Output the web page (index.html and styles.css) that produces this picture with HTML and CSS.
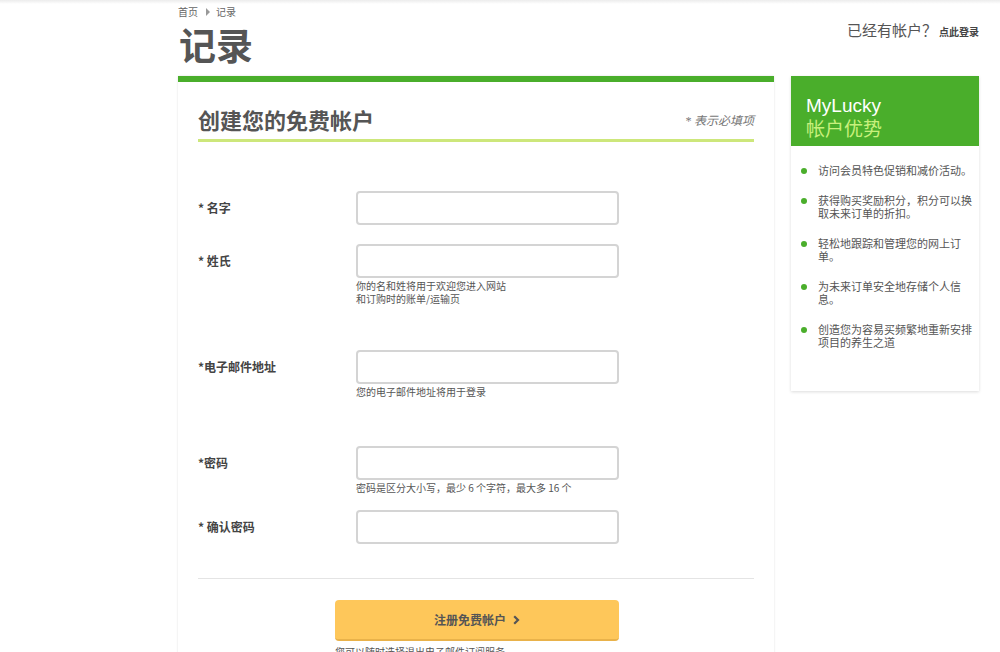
FILE: index.html
```html
<!DOCTYPE html>
<html lang="zh">
<head>
<meta charset="utf-8">
<title>记录</title>
<link rel="stylesheet" href="styles.css">
</head>
<body>
<div class="page">
  <header class="top">
    <div class="top-left">
      <nav class="crumbs"><span>首页</span><span class="crumb-arrow"></span><span>记录</span></nav>
      <h1 class="title">记录</h1>
    </div>
    <div class="login-hint">已经有帐户？<a class="login-link">点此登录</a></div>
  </header>

  <div class="columns">
    <main class="card">
      <div class="card-head">
        <h2 class="card-title">创建您的免费帐户</h2>
        <span class="req-note">* 表示必填项</span>
      </div>

      <form class="form">
        <div class="row row-1">
          <label class="label">* 名字</label>
          <div class="field"><input class="input" type="text"></div>
        </div>
        <div class="row row-2">
          <label class="label">* 姓氏</label>
          <div class="field">
            <input class="input" type="text">
            <p class="help help-first">你的名和姓将用于欢迎您进入网站</p>
            <p class="help help-next">和订购时的账单/运输页</p>
          </div>
        </div>
        <div class="row row-3">
          <label class="label">*电子邮件地址</label>
          <div class="field">
            <input class="input" type="text">
            <p class="help">您的电子邮件地址将用于登录</p>
          </div>
        </div>
        <div class="row row-4">
          <label class="label">*密码</label>
          <div class="field">
            <input class="input" type="password">
            <p class="help">密码是区分大小写，最少 6 个字符，最大多 16 个</p>
          </div>
        </div>
        <div class="row row-5">
          <label class="label">* 确认密码</label>
          <div class="field"><input class="input" type="password"></div>
        </div>

        <hr class="divider">

        <div class="submit-wrap">
          <button class="submit" type="button">注册免费帐户<svg class="chev" width="7" height="10" viewBox="0 0 7 10"><path d="M1.2 1.2 L5 5 L1.2 8.8" fill="none" stroke="#555" stroke-width="2.2"/></svg></button>
          <p class="submit-note">您可以随时选择退出电子邮件订阅服务</p>
        </div>
      </form>
    </main>

    <aside class="side">
      <div class="side-head">
        <div class="side-brand">MyLucky</div>
        <div class="side-sub">帐户优势</div>
      </div>
      <ul class="side-list">
        <li>访问会员特色促销和减价活动。</li>
        <li>获得购买奖励积分，积分可以换取未来订单的折扣。</li>
        <li>轻松地跟踪和管理您的网上订单。</li>
        <li>为未来订单安全地存储个人信息。</li>
        <li>创造您为容易买频繁地重新安排项目的养生之道</li>
      </ul>
    </aside>
  </div>
</div>
</body>
</html>
```

FILE: styles.css
```css
* { box-sizing: border-box; }
html, body { margin: 0; padding: 0; }
body {
  font-family: "Noto Sans CJK SC", "Liberation Sans", sans-serif;
  color: #555;
  background: #fff linear-gradient(#ececec, #fff 4px) no-repeat;
  height: 652px;
  overflow: hidden;
}
.page {
  width: 801px;
  margin-left: 178px;
}
.top {
  display: flex;
  justify-content: space-between;
  align-items: flex-start;
  height: 76px;
}
.crumbs {
  display: flex;
  align-items: center;
  font-size: 10px;
  line-height: 12px;
  padding-top: 6px;
  color: #666;
}
.crumb-arrow {
  width: 0; height: 0;
  border-left: 4px solid #999;
  border-top: 4px solid transparent;
  border-bottom: 4px solid transparent;
  margin: 0 6px 0 8px;
}
.title {
  margin: 6px 0 0 1px;
  font-size: 37px;
  line-height: 40px;
  font-weight: 700;
  color: #555;
}
.login-hint {
  padding-top: 19px;
  font-size: 15px;
  line-height: 22px;
  color: #555;
}
.login-link {
  font-size: 10px;
  font-weight: 700;
  color: #444;
  margin-left: 2px;
}
.columns {
  display: flex;
  align-items: flex-start;
  gap: 17px;
}
.card {
  width: 596px;
  height: 600px;
  border-top: 6px solid #4aae2b;
  box-shadow: 0 0 2px rgba(0,0,0,0.12);
  padding: 0 20px;
  background: #fff;
}
.card-head {
  display: flex;
  justify-content: space-between;
  align-items: flex-end;
  margin-top: 22px;
  padding-bottom: 5px;
  border-bottom: 3px solid #cde77b;
}
.card-title {
  margin: 0;
  font-size: 22px;
  line-height: 30px;
  font-weight: 700;
  color: #555;
}
.req-note {
  font-family: "Liberation Serif", "Noto Sans CJK SC", serif;
  font-style: italic;
  font-size: 12px;
  line-height: 14px;
  color: #777;
  padding-bottom: 6px;
}
.form { padding-top: 49px; }
.row {
  display: grid;
  grid-template-columns: 158px 263px;
  align-items: start;
}
.row-1 { margin-bottom: 19px; }
.row-2 { margin-bottom: 45px; }
.row-3 { margin-bottom: 48px; }
.row-4 { margin-bottom: 16px; }
.label {
  font-size: 12px;
  font-weight: 700;
  line-height: 34px;
  color: #444;
}
.input {
  display: block;
  width: 263px;
  height: 34px;
  border: 2px solid #d4d4d4;
  border-radius: 4px;
  background: #fff;
  margin: 0;
}
.help {
  margin: 2px 0 0;
  font-size: 10px;
  line-height: 12px;
  color: #555;
}
.help-first { margin-top: 1px; line-height: 13px; }
.help-next { margin-top: 0; line-height: 13px; }
.divider {
  border: 0;
  border-top: 1px solid #e4e4e4;
  margin: 34px 0 21px;
}
.submit-wrap { padding-left: 137px; }
.submit {
  display: flex;
  align-items: center;
  justify-content: center;
  width: 284px;
  height: 41px;
  border: 0;
  border-bottom: 2px solid #e9b24a;
  border-radius: 4px;
  background: #fec75a;
  font-family: "Noto Sans CJK SC", "Liberation Sans", sans-serif;
  font-size: 12px;
  font-weight: 700;
  color: #555;
  padding: 0;
}
.chev { margin-left: 7px; }
.submit-note {
  margin: 5px 0 0;
  font-size: 10px;
  line-height: 12px;
  color: #555;
}
.side {
  width: 188px;
  background: #fff;
  box-shadow: 0 1px 3px rgba(0,0,0,0.14);
}
.side-head {
  background: #4aae2b;
  height: 70px;
  padding: 19px 15px 0;
  font-size: 19px;
  line-height: 22px;
  font-family: "Liberation Sans", "Noto Sans CJK SC", sans-serif;
}
.side-brand { color: #fff; }
.side-sub { color: #c8f07c; font-family: "Noto Sans CJK SC", sans-serif; line-height: 22px; }
.side-list {
  list-style: none;
  margin: 0;
  padding: 18px 3px 42px 27px;
  display: flex;
  flex-direction: column;
  gap: 17px;
}
.side-list li {
  position: relative;
  font-size: 11px;
  line-height: 13px;
  color: #555;
}
.side-list li::before {
  content: "";
  position: absolute;
  left: -17px;
  top: 4px;
  width: 6px;
  height: 6px;
  border-radius: 50%;
  background: #4aae2b;
}
```
